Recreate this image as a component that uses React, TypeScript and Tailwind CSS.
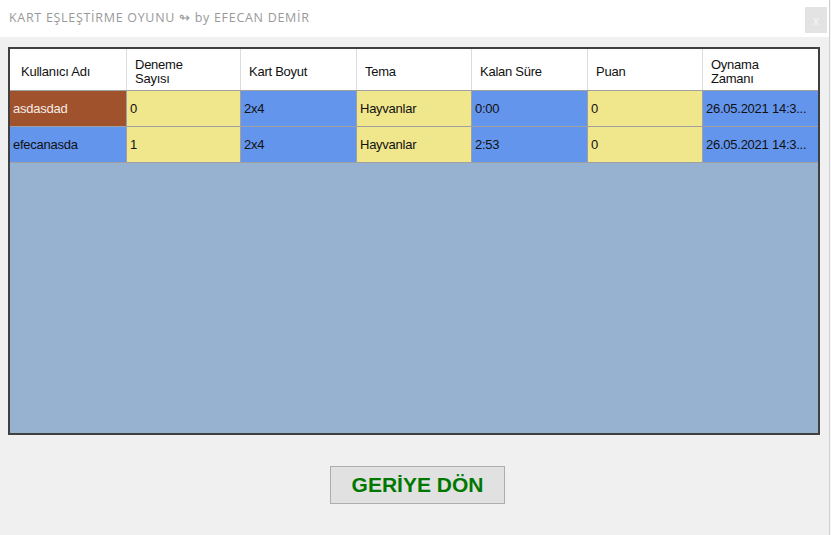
import React from "react";

const headers: { lines: string[] }[] = [
  { lines: ["Kullanıcı Adı"] },
  { lines: ["Deneme", "Sayısı"] },
  { lines: ["Kart Boyut"] },
  { lines: ["Tema"] },
  { lines: ["Kalan Süre"] },
  { lines: ["Puan"] },
  { lines: ["Oynama", "Zamanı"] },
];

type Cell = { text: string; bg: string; fg?: string };

const rows: Cell[][] = [
  [
    { text: "asdasdad", bg: "bg-[#a0522d]", fg: "text-[#f4ece6]" },
    { text: "0", bg: "bg-[#f0e68c]" },
    { text: "2x4", bg: "bg-[#6495ed]" },
    { text: "Hayvanlar", bg: "bg-[#f0e68c]" },
    { text: "0:00", bg: "bg-[#6495ed]" },
    { text: "0", bg: "bg-[#f0e68c]" },
    { text: "26.05.2021 14:3...", bg: "bg-[#6495ed]" },
  ],
  [
    { text: "efecanasda", bg: "bg-[#6495ed]" },
    { text: "1", bg: "bg-[#f0e68c]" },
    { text: "2x4", bg: "bg-[#6495ed]" },
    { text: "Hayvanlar", bg: "bg-[#f0e68c]" },
    { text: "2:53", bg: "bg-[#6495ed]" },
    { text: "0", bg: "bg-[#f0e68c]" },
    { text: "26.05.2021 14:3...", bg: "bg-[#6495ed]" },
  ],
];

const cols = "grid grid-cols-[117px_114px_116px_115px_116px_115px_115px]";
const font = { fontFamily: '"Liberation Sans", Arial, sans-serif' };

export default function App() {
  return (
    <div className="flex w-[831px] h-[535px] overflow-hidden bg-[#f0f0f0]">
      <div className="flex flex-col w-[829px] h-full">
        {/* Title bar */}
        <div className="flex items-center justify-between h-[37px] bg-white pl-[9px] pr-[2px]">
          <span
            className="text-[12.5px] text-[#999999] tracking-[0.7px] pb-[1px]"
            style={{ fontFamily: '"Open Sans", "Noto Sans", sans-serif' }}
          >
            KART EŞLEŞTİRME OYUNU ↬ by EFECAN DEMİR
          </span>
          <div className="flex items-center justify-center w-[22px] h-[26px] mt-[3px] bg-[#e3e3e3] text-[#f4f4f4] text-[13px] leading-none" style={font}>
            x
          </div>
        </div>

        {/* Grid */}
        <div className="mt-[10px] ml-[8px] w-[812px] h-[388px] border-2 border-[#404040] bg-[#97b1d1] flex flex-col" style={font}>
          <div className={`${cols} h-[42px] bg-white border-b border-[#a0a0a0]`}>
            {headers.map((h, i) => (
              <div
                key={i}
                className={`flex flex-col justify-center ${i === 0 ? "pl-[11px]" : "pl-[8px]"} ${i < 6 ? "border-r border-[#dcdcdc]" : ""} pt-[4px] text-[13px] leading-[14px] tracking-[-0.25px] text-[#111]`}
              >
                {h.lines.map((l) => (
                  <span key={l}>{l}</span>
                ))}
              </div>
            ))}
          </div>
          {rows.map((r, ri) => (
            <div key={ri} className={`${cols} h-[36px]`}>
              {r.map((c, ci) => (
                <div
                  key={ci}
                  className={`flex items-center pl-[3px] border-b border-[#a0a0a0] ${ci < 6 ? "border-r" : ""} ${c.bg} ${c.fg ?? "text-[#111]"} text-[13px] tracking-[-0.25px] whitespace-nowrap overflow-hidden`}
                >
                  {c.text}
                </div>
              ))}
            </div>
          ))}
        </div>

        {/* Button */}
        <div className="mt-[31px] ml-[330px]">
          <button
            className="w-[175px] h-[38px] bg-[#e1e1e1] border border-[#adadad] text-[#007800] text-[21px] font-bold flex items-center justify-center"
            style={font}
          >
            GERİYE DÖN
          </button>
        </div>
      </div>
      <div className="w-[1px] h-full bg-[#d0d0d0]" />
      <div className="w-[1px] h-full bg-[#f5f5f5]" />
    </div>
  );
}
